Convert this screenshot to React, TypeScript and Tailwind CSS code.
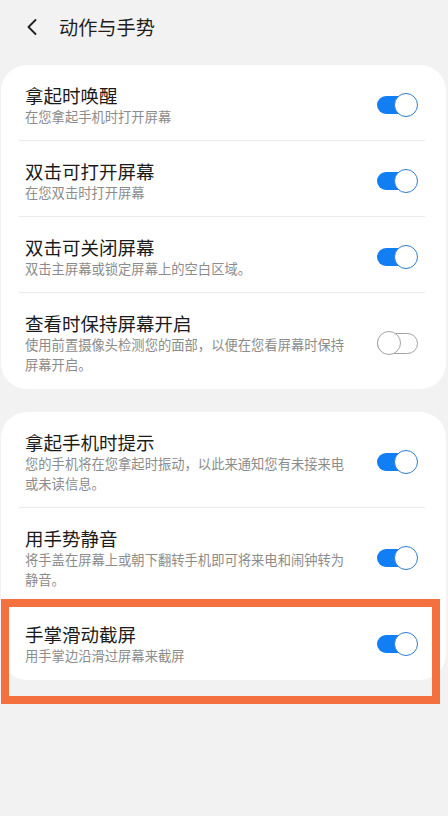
import { ChevronLeft } from 'lucide-react'

type Item = { title: string; desc: string; on: boolean }

const groupOne: Item[] = [
  { title: '拿起时唤醒', desc: '在您拿起手机时打开屏幕', on: true },
  { title: '双击可打开屏幕', desc: '在您双击时打开屏幕', on: true },
  { title: '双击可关闭屏幕', desc: '双击主屏幕或锁定屏幕上的空白区域。', on: true },
  { title: '查看时保持屏幕开启', desc: '使用前置摄像头检测您的面部，以便在您看屏幕时保持屏幕开启。', on: false },
]

const groupTwo: Item[] = [
  { title: '拿起手机时提示', desc: '您的手机将在您拿起时振动，以此来通知您有未接来电或未读信息。', on: true },
  { title: '用手势静音', desc: '将手盖在屏幕上或朝下翻转手机即可将来电和闹钟转为静音。', on: true },
  { title: '手掌滑动截屏', desc: '用手掌边沿滑过屏幕来截屏', on: true },
]

function Toggle({ on }: { on: boolean }) {
  if (on) {
    return (
      <span className="relative block h-6 w-[41px] shrink-0">
        <span className="absolute left-0 top-[3px] h-[18px] w-[36px] rounded-full bg-[#127ef4]" />
        <span className="absolute right-0 top-0 h-6 w-6 rounded-full border-[1.5px] border-[#2f7ccc] bg-white" />
      </span>
    )
  }
  return (
    <span className="relative block h-6 w-[41px] shrink-0">
      <span className="absolute left-0 top-[2px] h-[21px] w-[41px] rounded-full border-[1.5px] border-[#a3a3a3]" />
      <span className="absolute left-0 top-0 h-6 w-6 rounded-full border-[1.5px] border-[#a3a3a3] bg-white" />
    </span>
  )
}

function Row({ item, last }: { item: Item; last: boolean }) {
  return (
    <div className="relative flex items-center pl-6 pr-[28px] pt-[18px] pb-[14px]">
      <div className="w-[326px] flex-none">
        <p className="text-[18.5px] leading-6 text-[#1b1b1b]">{item.title}</p>
        <p className="text-[13.3px] leading-5 text-[#8c8c8c]">{item.desc}</p>
      </div>
      <div className="flex flex-1 justify-end">
        <Toggle on={item.on} />
      </div>
      {!last && <div className="absolute bottom-0 left-[18px] right-[21px] h-px bg-[#ebebeb]" />}
    </div>
  )
}

function Card({ items }: { items: Item[] }) {
  return (
    <div className="ml-[1px] mr-[2px] rounded-[26px] bg-white">
      {items.map((item, i) => (
        <Row key={item.title} item={item} last={i === items.length - 1} />
      ))}
    </div>
  )
}

export default function App() {
  return (
    <div
      className="relative min-h-[816px] w-full bg-[#f2f2f2]"
      style={{ fontFamily: '"Noto Sans CJK SC", "Noto Sans", sans-serif' }}
    >
      <header className="flex h-[65px] items-start pt-[13px]">
        <ChevronLeft className="ml-[18px] size-[28px] text-[#222]" strokeWidth={1.6} />
        <h1 className="ml-[13px] text-[19.2px] leading-7 text-[#1e1e1e]">动作与手势</h1>
      </header>
      <Card items={groupOne} />
      <div className="h-[23px]" />
      <Card items={groupTwo} />
      <div className="pointer-events-none absolute left-[1px] top-[599px] h-[105px] w-[439px] border-[8px] border-[#f4703f]" />
    </div>
  )
}
